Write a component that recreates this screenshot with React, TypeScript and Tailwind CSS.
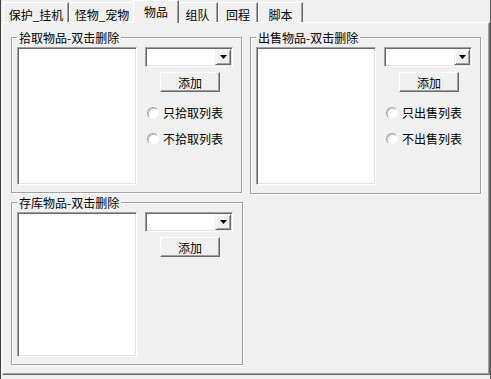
import React from 'react'

const font = { fontFamily: '"Noto Sans CJK SC", "Noto Sans", sans-serif' }

function Tab({ label, w, selected }: { label: string; w: string; selected?: boolean }) {
  if (selected) {
    return (
      <div
        className={`${w} -mx-[2px] h-[23px] relative z-10 bg-[#f0f0f0] border-t border-l border-white border-r border-r-[#696969] shadow-[inset_-1px_0_0_#a0a0a0] text-center text-[12px] leading-[13px] pt-[4px] text-black`}
      >
        {label}
      </div>
    )
  }
  return (
    <div
      className={`${w} mt-[2px] h-[20px] bg-[#f0f0f0] border-t border-l border-white border-r border-r-[#696969] shadow-[inset_-1px_0_0_#a0a0a0] text-center text-[12px] leading-[13px] pt-[5px] text-black`}
    >
      {label}
    </div>
  )
}

function GroupBox({ title, className, children }: { title: string; className: string; children: React.ReactNode }) {
  return (
    <div
      className={`${className} relative border border-[#a0a0a0] shadow-[inset_1px_1px_0_#fff,1px_1px_0_#fff] flex pl-[5px] pt-[9px]`}
    >
      <div className="absolute left-[5px] -top-[7px] px-[2px] bg-[#f0f0f0] text-[12px] leading-[13px] text-black whitespace-nowrap">
        {title}
      </div>
      {children}
    </div>
  )
}

function ListBox({ h }: { h: string }) {
  return (
    <div className={`w-[120px] ${h} bg-white border border-t-[#a0a0a0] border-l-[#a0a0a0] border-r-white border-b-white shadow-[inset_1px_1px_0_#696969,inset_-1px_-1px_0_#e3e3e3]`} />
  )
}

function Combo() {
  return (
    <div className="w-[88px] h-[20px] bg-white border border-t-[#a0a0a0] border-l-[#a0a0a0] border-r-white border-b-white shadow-[inset_1px_1px_0_#696969,inset_-1px_-1px_0_#e3e3e3] flex justify-end p-[1px]">
      <div className="w-[16px] h-[16px] bg-[#f0f0f0] border border-t-[#f0f0f0] border-l-[#f0f0f0] border-r-[#696969] border-b-[#696969] shadow-[inset_1px_1px_0_#fff,inset_-1px_-1px_0_#a0a0a0] flex items-center justify-center">
        <svg width="7" height="4" viewBox="0 0 7 4">
          <path d="M0 0h7L3.5 4z" fill="#000" />
        </svg>
      </div>
    </div>
  )
}

function Button({ label }: { label: string }) {
  return (
    <div className="ml-[15px] mt-[5px] w-[60px] h-[20px] bg-[#f0f0f0] border border-t-white border-l-white border-r-[#696969] border-b-[#696969] shadow-[inset_-1px_-1px_0_#a0a0a0] flex items-center justify-center text-[12px] leading-[13px] text-black">
      {label}
    </div>
  )
}

function Radio({ label, className }: { label: string; className: string }) {
  return (
    <div className={`${className} ml-[2px] h-[13px] flex items-center gap-[4px]`}>
      <div className="w-[12px] h-[12px] rounded-full bg-white border border-t-[#a0a0a0] border-l-[#a0a0a0] border-r-[#f8f8f8] border-b-[#f8f8f8] shadow-[inset_1px_1px_0_#c8c8c8]" />
      <span className="text-[12px] leading-[13px] text-black whitespace-nowrap">{label}</span>
    </div>
  )
}

export default function App() {
  return (
    <div
      className="w-[491px] h-[379px] bg-[#f0f0f0] border-l border-l-[#39463a] border-r border-r-[#595959] flex flex-col overflow-hidden"
      style={font}
    >
      <div className="h-[22px] flex items-start pl-[2px] relative z-10">
        <Tab label="保护_挂机" w="w-[66px]" />
        <Tab label="怪物_宠物" w="w-[66px]" />
        <Tab label="物品" w="w-[46px]" selected />
        <Tab label="组队" w="w-[41px]" />
        <Tab label="回程" w="w-[40px]" />
        <Tab label="脚本" w="w-[45px]" />
      </div>
      <div className="ml-[1px] w-[488px] h-[353px] border-t border-l border-white border-r border-r-[#696969] border-b border-b-[#696969] shadow-[inset_-1px_-1px_0_#a0a0a0] pt-[14px] pl-[8px] flex flex-col">
        <div className="flex gap-[8px]">
          <GroupBox title="拾取物品-双击删除" className="w-[231px] h-[156px]">
            <ListBox h="h-[138px]" />
            <div className="ml-[8px] flex flex-col">
              <Combo />
              <Button label="添加" />
              <Radio label="只拾取列表" className="mt-[14px]" />
              <Radio label="不拾取列表" className="mt-[13px]" />
            </div>
          </GroupBox>
          <GroupBox title="出售物品-双击删除" className="w-[231px] h-[157px]">
            <ListBox h="h-[138px]" />
            <div className="ml-[8px] flex flex-col">
              <Combo />
              <Button label="添加" />
              <Radio label="只出售列表" className="mt-[14px]" />
              <Radio label="不出售列表" className="mt-[13px]" />
            </div>
          </GroupBox>
        </div>
        <GroupBox title="存库物品-双击删除" className="mt-[8px] w-[232px] h-[163px]">
          <ListBox h="h-[145px]" />
          <div className="ml-[8px] flex flex-col">
            <Combo />
            <Button label="添加" />
          </div>
        </GroupBox>
      </div>
    </div>
  )
}
